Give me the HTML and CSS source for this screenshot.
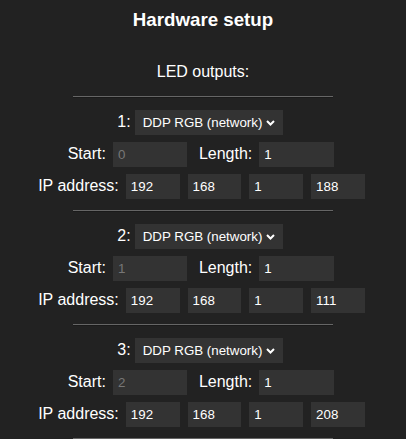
FILE: index.html
```html
<!DOCTYPE html>
<html>
<head>
<meta charset="utf-8">
<link rel="stylesheet" href="styles.css">
</head>
<body>
<h3 class="title">Hardware setup</h3>
<div class="line">LED outputs:</div>
<hr>
<div class="block">
  <div class="line row r-type"><span class="lbl idx">1:</span><span class="sel"><select><option>DDP RGB (network)</option></select><svg class="chev" width="9" height="6" viewBox="0 0 9 6"><path d="M1 1l3.5 3.5L8 1" fill="none" stroke="#fff" stroke-width="2"/></svg></span></div>
  <div class="line row r-range"><span class="lbl">Start:</span><input class="num dis" value="0" disabled><span class="lbl gapl">Length:</span><input class="num len" value="1"></div>
  <div class="line row r-ip"><span class="lbl">IP address:</span><input class="ip" value="192"><input class="ip" value="168"><input class="ip" value="1"><input class="ip" value="188"></div>
</div>
<hr>
<div class="block">
  <div class="line row r-type"><span class="lbl idx">2:</span><span class="sel"><select><option>DDP RGB (network)</option></select><svg class="chev" width="9" height="6" viewBox="0 0 9 6"><path d="M1 1l3.5 3.5L8 1" fill="none" stroke="#fff" stroke-width="2"/></svg></span></div>
  <div class="line row r-range"><span class="lbl">Start:</span><input class="num dis" value="1" disabled><span class="lbl gapl">Length:</span><input class="num len" value="1"></div>
  <div class="line row r-ip"><span class="lbl">IP address:</span><input class="ip" value="192"><input class="ip" value="168"><input class="ip" value="1"><input class="ip" value="111"></div>
</div>
<hr>
<div class="block">
  <div class="line row r-type"><span class="lbl idx">3:</span><span class="sel"><select><option>DDP RGB (network)</option></select><svg class="chev" width="9" height="6" viewBox="0 0 9 6"><path d="M1 1l3.5 3.5L8 1" fill="none" stroke="#fff" stroke-width="2"/></svg></span></div>
  <div class="line row r-range"><span class="lbl">Start:</span><input class="num dis" value="2" disabled><span class="lbl gapl">Length:</span><input class="num len" value="1"></div>
  <div class="line row r-ip"><span class="lbl">IP address:</span><input class="ip" value="192"><input class="ip" value="168"><input class="ip" value="1"><input class="ip" value="208"></div>
</div>
<hr>
</body>
</html>
```
FILE: styles.css
```css
html, body {
  margin: 0;
  padding: 0;
  background: #222;
  color: #fff;
  font-family: "Liberation Sans", Arial, sans-serif;
  font-size: 16px;
  text-align: center;
}
.title {
  margin: 0 0 16px;
  height: 40px;
  line-height: 40px;
  font-size: 18.72px;
  font-weight: bold;
}
.line {
  height: 32px;
  line-height: 32px;
}
.row {
  display: flex;
  justify-content: center;
  align-items: center;
}
.r-type { padding-right: 6px; }
.r-range { padding-right: 4px; }
.r-ip { padding-right: 3px; }
hr {
  width: 260px;
  margin: 8px auto;
  height: 0;
  border: 0;
  border-top: 1px solid #666;
  border-bottom: 1px solid #1a1a1a;
}
.lbl {
  margin-right: 7px;
}
.idx {
  margin-right: 4px;
}
.gapl {
  margin-left: 12px;
  margin-right: 7px;
}
input, select {
  font-family: "Liberation Sans", Arial, sans-serif;
  font-size: 13.33px;
  background: #333;
  color: #fff;
  border: 0;
  outline: none;
  height: 25px;
  box-sizing: border-box;
  padding: 0 5px;
  margin: 0;
  border-radius: 0;
}
.num { width: 74px; }
.len { width: 75px; }
.dis { color: #777; }
.ip { width: 53.75px; margin-right: 8px; }
.ip:last-child { margin-right: 0; }
.sel {
  position: relative;
  display: flex;
  height: 25px;
  line-height: normal;
}
select {
  -webkit-appearance: none;
  appearance: none;
  width: 148px;
  padding: 0 20px 0 8px;
  text-align: left;
}
.chev {
  position: absolute;
  right: 8px;
  top: 10px;
  pointer-events: none;
}
```
